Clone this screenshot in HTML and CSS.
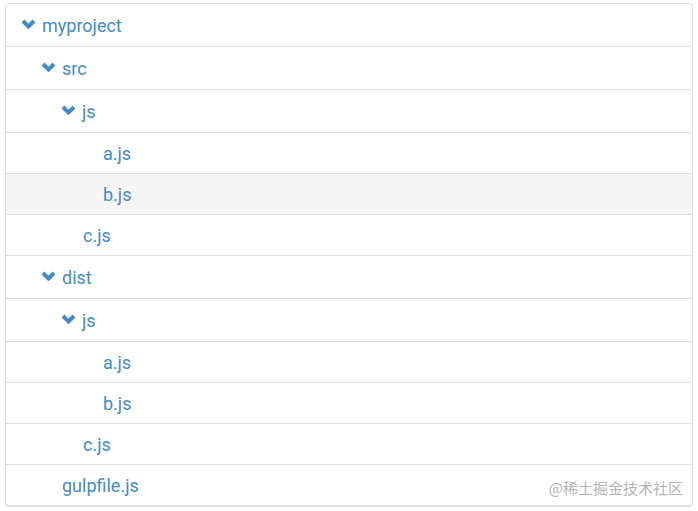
FILE: index.html
```html
<!DOCTYPE html>
<html lang="zh">
<head>
<meta charset="utf-8">
<link rel="stylesheet" href="styles.css">
</head>
<body>
<div class="tree">
  <div class="row folder lv0"><svg class="chev" viewBox="0 0 15 10"><polyline points="2,2 7.5,7.5 13,2"/></svg><span>myproject</span></div>
  <div class="row folder lv1"><svg class="chev" viewBox="0 0 15 10"><polyline points="2,2 7.5,7.5 13,2"/></svg><span>src</span></div>
  <div class="row folder lv2"><svg class="chev" viewBox="0 0 15 10"><polyline points="2,2 7.5,7.5 13,2"/></svg><span>js</span></div>
  <div class="row file lv3"><span>a.js</span></div>
  <div class="row file lv3 active"><span>b.js</span></div>
  <div class="row file lv2"><span>c.js</span></div>
  <div class="row folder lv1"><svg class="chev" viewBox="0 0 15 10"><polyline points="2,2 7.5,7.5 13,2"/></svg><span>dist</span></div>
  <div class="row folder lv2"><svg class="chev" viewBox="0 0 15 10"><polyline points="2,2 7.5,7.5 13,2"/></svg><span>js</span></div>
  <div class="row file lv3"><span>a.js</span></div>
  <div class="row file lv3"><span>b.js</span></div>
  <div class="row file lv2"><span>c.js</span></div>
  <div class="row file lv1"><span>gulpfile.js</span></div>
  <div class="watermark">@稀土掘金技术社区</div>
</div>
</body>
</html>
```
FILE: styles.css
```css
html, body {
  margin: 0;
  padding: 0;
  background: #fff;
}
body {
  padding: 3px 5px;
  font-family: Roboto, "Liberation Sans", sans-serif;
}
.tree {
  position: relative;
  border: 1px solid #dddddd;
  border-radius: 4px;
  overflow: hidden;
}
.row {
  display: flex;
  align-items: center;
  font-size: 18px;
  line-height: 20px;
  color: #428bca;
  padding: 11px 15px 9px;
  border-bottom: 1px solid #dddddd;
}
.row:last-of-type {
  border-bottom: none;
}
.row.folder {
  padding-top: 12px;
  padding-bottom: 10px;
}
.row.active {
  background: #f5f5f5;
}
.chev {
  width: 15px;
  height: 10px;
  margin-right: 6px;
  margin-top: -4px;
  flex: none;
}
.chev polyline {
  fill: none;
  stroke: #428bca;
  stroke-width: 4;
  stroke-linejoin: miter;
  stroke-linecap: butt;
}
.file.lv1 { padding-left: 56px; }
.file.lv2 { padding-left: 77px; }
.file.lv3 { padding-left: 97px; }
.folder.lv1 { padding-left: 35px; }
.folder.lv2 { padding-left: 55px; }
.watermark {
  position: absolute;
  right: 9px;
  bottom: 8px;
  font-family: "Noto Sans CJK SC", sans-serif;
  font-size: 15px;
  line-height: 20px;
  color: #b3b3b3;
}
```
